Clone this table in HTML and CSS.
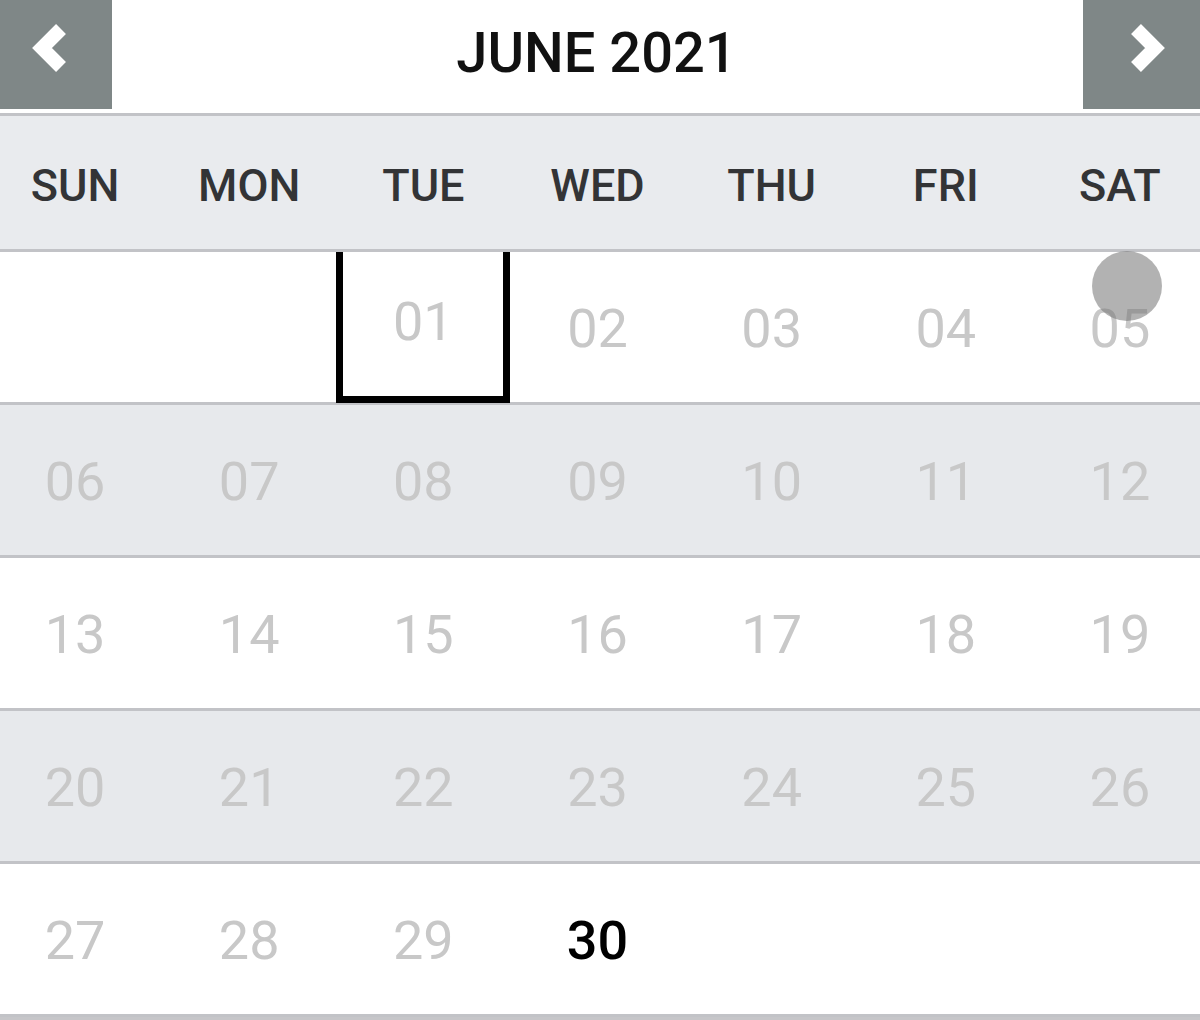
FILE: index.html
```html
<!DOCTYPE html>
<html lang="en">
<head>
<meta charset="utf-8">
<title>June 2021</title>
<link rel="stylesheet" href="styles.css">
</head>
<body>
<div class="cal">
  <header class="cal-head">
    <button class="nav prev" aria-label="Previous month">
      <svg viewBox="0 0 124 109" width="124" height="109"><polyline points="73,29 54,48 73,67" /></svg>
    </button>
    <h1 class="title">JUNE 2021</h1>
    <button class="nav next" aria-label="Next month">
      <svg viewBox="0 0 124 109" width="124" height="109"><polyline points="53,29 72,48 53,67" /></svg>
    </button>
  </header>
  <div class="weekdays">
    <div>SUN</div><div>MON</div><div>TUE</div><div>WED</div><div>THU</div><div>FRI</div><div>SAT</div>
  </div>
  <div class="week">
    <div class="day"></div><div class="day"></div><div class="day focus">01</div><div class="day">02</div><div class="day">03</div><div class="day">04</div><div class="day">05</div>
  </div>
  <div class="week alt">
    <div class="day">06</div><div class="day">07</div><div class="day">08</div><div class="day">09</div><div class="day">10</div><div class="day">11</div><div class="day">12</div>
  </div>
  <div class="week">
    <div class="day">13</div><div class="day">14</div><div class="day">15</div><div class="day">16</div><div class="day">17</div><div class="day">18</div><div class="day">19</div>
  </div>
  <div class="week alt">
    <div class="day">20</div><div class="day">21</div><div class="day">22</div><div class="day">23</div><div class="day">24</div><div class="day">25</div><div class="day">26</div>
  </div>
  <div class="week">
    <div class="day">27</div><div class="day">28</div><div class="day">29</div><div class="day today">30</div><div class="day"></div><div class="day"></div><div class="day"></div>
  </div>
  <span class="touch"></span>
</div>
</body>
</html>
```
FILE: styles.css
```css
html, body {
  margin: 0;
  padding: 0;
}
body {
  background: #c6c6c9;
  overflow: hidden;
  width: 1200px;
  height: 1020px;
  font-family: Roboto, "Liberation Sans", sans-serif;
}
.cal {
  position: relative;
  width: 1219px;
  margin-left: -12px;
  background: #ffffff;
}
.cal-head {
  display: flex;
  align-items: flex-start;
  height: 113px;
  border-bottom: 3px solid #c2c3c7;
  background: #ffffff;
}
.nav {
  width: 124px;
  height: 109px;
  padding: 0;
  margin: 0;
  border: 0;
  background: #7f8787;
  display: block;
  flex: none;
}
.nav svg {
  display: block;
}
.nav polyline {
  fill: none;
  stroke: #ffffff;
  stroke-width: 14;
  stroke-linejoin: miter;
  stroke-linecap: butt;
}
.title {
  flex: 1;
  margin: 0;
  padding-right: 2px;
  text-align: center;
  font-size: 56px;
  font-weight: 500;
  line-height: 107px;
  color: #111111;
  letter-spacing: 0;
}
.weekdays {
  display: grid;
  grid-template-columns: repeat(7, 1fr);
  height: 133px;
  background: #e9ebee;
  border-bottom: 3px solid #c2c3c7;
}
.weekdays div {
  display: flex;
  align-items: center;
  justify-content: center;
  padding-top: 6px;
  font-size: 45px;
  font-weight: 500;
  color: #333436;
}
.week {
  display: grid;
  grid-template-columns: repeat(7, 1fr);
  height: 150px;
  border-bottom: 3px solid #c2c3c7;
  background: #ffffff;
}
.week.alt {
  background: #e7e9ec;
}
.day {
  position: relative;
  display: flex;
  align-items: center;
  justify-content: center;
  padding-top: 2px;
  font-size: 54px;
  font-weight: 400;
  color: #c8c8c8;
}
.day.focus {
  padding-top: 0;
  padding-bottom: 12px;
}
.day.focus::after {
  content: "";
  position: absolute;
  top: 0;
  left: 0;
  right: 0;
  bottom: -1px;
  border: 7px solid #000000;
  border-top: 0;
}
.day.today {
  color: #000000;
  font-weight: 500;
}
.touch {
  position: absolute;
  left: 1104px;
  top: 251px;
  width: 70px;
  height: 70px;
  border-radius: 50%;
  background: rgba(120, 120, 120, 0.57);
}
```
